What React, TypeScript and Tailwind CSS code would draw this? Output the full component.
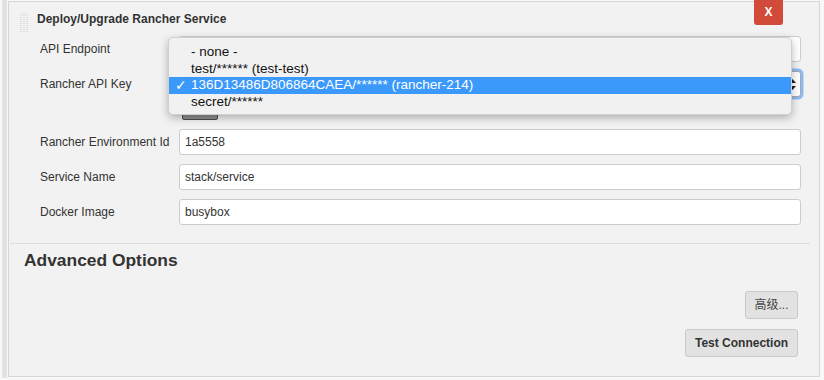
import React from 'react';

const font = { fontFamily: '"Liberation Sans", Arial, sans-serif' };

const Grip = () => (
  <svg width="8" height="20" viewBox="0 0 8 20" className="block">
    {Array.from({ length: 10 }).map((_, r) =>
      [0, 3, 6].map((c) => (
        <rect key={`${r}-${c}`} x={c} y={r * 2} width="2" height="1" fill="#e0e0e0" />
      ))
    )}
  </svg>
);

const TextRow = ({ label, value, className = '' }: { label: string; value: string; className?: string }) => (
  <div className={`flex items-center h-[26px] ${className}`}>
    <div className="w-[170px] pl-[31px] text-[12px] text-[#333]">{label}</div>
    <div className="w-[622px] h-[26px] bg-white border border-[#cccccc] rounded-[3px] flex items-center pl-[5px] text-[12px] text-[#333]">
      {value}
    </div>
  </div>
);

const options = ['- none -', 'test/****** (test-test)', '136D13486D806864CAEA/****** (rancher-214)', 'secret/******'];

export default function App() {
  return (
    <div className="flex w-[824px] h-[380px] bg-[#f8f8f8] overflow-hidden" style={font}>
      <div className="ml-[2px] w-[5px] h-[378px] bg-[#e2e2e2]" />
      <div className="relative ml-px mt-px w-[812px] h-[376px] border border-[#d6d6d6] bg-[#f2f2f2]">
        {/* header */}
        <div className="flex items-start h-[34px]">
          <div className="ml-[11px] mt-[11px]">
            <Grip />
          </div>
          <div className="ml-[9px] mt-[10px] text-[12px] leading-[14px] font-bold text-[#333]">
            Deploy/Upgrade Rancher Service
          </div>
          <button className="ml-auto mr-[36px] -mt-[2px] w-[29px] h-[25px] bg-[#d24a3a] rounded-b-[3px] text-white text-[12px] font-bold leading-[25px] text-center">
            X
          </button>
        </div>

        <TextRow label="API Endpoint" value="" />

        <div className="flex items-center h-[30px] mt-[7px]">
          <div className="w-[170px] pl-[31px] text-[12px] text-[#333]">Rancher API Key</div>
          <div className="relative ml-[2px] w-[620px] h-[26px] bg-white border border-[#a9a9a9] rounded-[3px] shadow-[0_0_0_2.5px_#8cbaf6]">
            <svg width="7" height="11" viewBox="0 0 7 11" className="absolute right-[4px] top-[7px]">
              <path d="M3.5 0 L7 4 L0 4 Z" fill="#222" />
              <path d="M3.5 11 L7 7 L0 7 Z" fill="#222" />
            </svg>
          </div>
        </div>

        <div className="flex h-[20px] mt-px">
          <div className="ml-[173px] w-[36px] h-[20px] bg-[#8e8e8e] border border-[#4d4d4d] rounded-[2px]" />
        </div>

        <TextRow label="Rancher Environment Id" value="1a5558" className="mt-[9px]" />
        <TextRow label="Service Name" value="stack/service" className="mt-[9px]" />
        <TextRow label="Docker Image" value="busybox" className="mt-[9px]" />

        <div className="mt-[18px] ml-px mr-[9px] border-t border-[#dcdcdc]" />

        <div className="mt-[6px] pl-[15px] text-[17.4px] leading-[20px] font-bold text-[#333]">Advanced Options</div>

        <div className="flex flex-col items-end pr-[21px]">
          <button
            className="mt-[21px] w-[53px] h-[28px] bg-[#e2e2e2] border border-[#c9c9c9] rounded-[3px] text-[12px] text-[#444]"
            style={{ fontFamily: '"Liberation Sans", "Noto Sans CJK SC", sans-serif' }}
          >
            高级...
          </button>
          <button className="mt-[10px] w-[113px] h-[28px] bg-[#e2e2e2] border border-[#c9c9c9] rounded-[3px] text-[12px] font-bold text-[#333]">
            Test Connection
          </button>
        </div>

        {/* open select menu */}
        <div className="absolute left-[159px] top-[35px] w-[624px] h-[78px] py-[6px] bg-[#f1f1f1] border border-[#d0d0d0] rounded-[5px] shadow-[0_3px_8px_rgba(0,0,0,0.28)] overflow-hidden">
          {options.map((o, i) => (
            <div
              key={o}
              className={`relative h-[16.5px] leading-[16.5px] pl-[22px] text-[13.5px] ${i === 2 ? 'bg-[#3b99fc] text-white' : 'text-[#111]'}`}
            >
              {i === 2 && (
                <span className="absolute left-[6px] top-0 text-[14px] font-bold" style={{ fontFamily: '"DejaVu Sans", sans-serif' }}>
                  ✓
                </span>
              )}
              {o}
            </div>
          ))}
        </div>
      </div>
    </div>
  );
}
